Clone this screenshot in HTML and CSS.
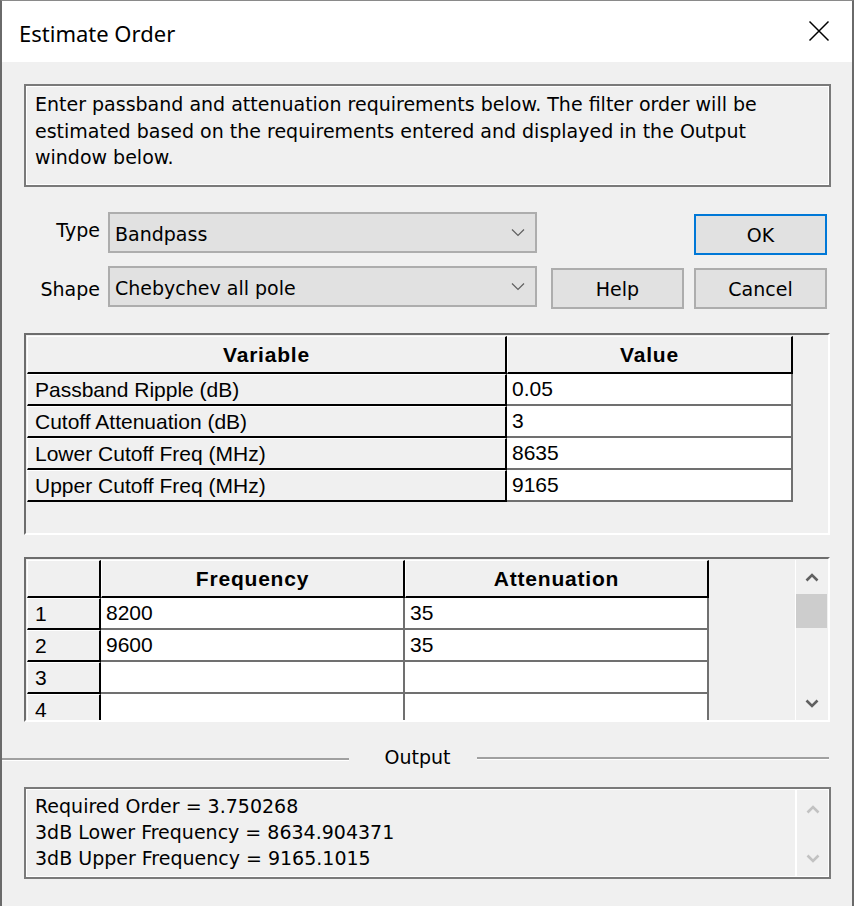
FILE: index.html
```html
<!DOCTYPE html>
<html>
<head>
<meta charset="utf-8">
<link rel="stylesheet" href="styles.css">
</head>
<body>
<div class="window">
  <div class="titlebar">
    <span class="title">Estimate Order</span>
    <svg class="close" width="22" height="22" viewBox="0 0 22 22"><path d="M1.5 1.5 L20.5 20.5 M20.5 1.5 L1.5 20.5" stroke="#000" stroke-width="1.5" fill="none"/></svg>
  </div>
  <div class="body">
    <div class="desc">Enter passband and attenuation requirements below. The filter order will be estimated based on the requirements entered and displayed in the Output window below.</div>

    <div class="controls">
      <div class="fields">
        <div class="field">
          <span class="label label-type">Type</span>
          <div class="combo"><span>Bandpass</span><svg width="14" height="9" viewBox="0 0 14 9"><path d="M1 1.5 L7 7.5 L13 1.5" stroke="#5f5f5f" stroke-width="1.2" fill="none"/></svg></div>
        </div>
        <div class="field">
          <span class="label label-shape">Shape</span>
          <div class="combo"><span>Chebychev all pole</span><svg width="14" height="9" viewBox="0 0 14 9"><path d="M1 1.5 L7 7.5 L13 1.5" stroke="#5f5f5f" stroke-width="1.2" fill="none"/></svg></div>
        </div>
      </div>
      <div class="buttons">
        <span></span>
        <div class="btn default">OK</div>
        <div class="btn">Help</div>
        <div class="btn">Cancel</div>
      </div>
    </div>

    <div class="grid grid1">
      <div class="row">
        <div class="hcell w-var">Variable</div>
        <div class="hcell w-val">Value</div>
      </div>
      <div class="row">
        <div class="ncell w-var">Passband Ripple (dB)</div>
        <div class="dcell w-val">0.05</div>
      </div>
      <div class="row">
        <div class="ncell w-var">Cutoff Attenuation (dB)</div>
        <div class="dcell w-val">3</div>
      </div>
      <div class="row">
        <div class="ncell w-var">Lower Cutoff Freq (MHz)</div>
        <div class="dcell w-val">8635</div>
      </div>
      <div class="row">
        <div class="ncell w-var">Upper Cutoff Freq (MHz)</div>
        <div class="dcell w-val">9165</div>
      </div>
    </div>

    <div class="grid grid2">
      <div class="gtable">
        <div class="row">
          <div class="hcell w-num"></div>
          <div class="hcell w-col">Frequency</div>
          <div class="hcell w-col">Attenuation</div>
        </div>
        <div class="row">
          <div class="ncell w-num">1</div>
          <div class="dcell w-col">8200</div>
          <div class="dcell w-col">35</div>
        </div>
        <div class="row">
          <div class="ncell w-num">2</div>
          <div class="dcell w-col">9600</div>
          <div class="dcell w-col">35</div>
        </div>
        <div class="row">
          <div class="ncell w-num">3</div>
          <div class="dcell w-col"></div>
          <div class="dcell w-col"></div>
        </div>
        <div class="row">
          <div class="ncell w-num">4</div>
          <div class="dcell w-col"></div>
          <div class="dcell w-col"></div>
        </div>
      </div>
      <div class="vscroll">
        <div class="arrow up"><svg width="14" height="9" viewBox="0 0 14 9"><path d="M1.5 7.5 L7 2 L12.5 7.5" stroke="#606060" stroke-width="2.6" fill="none"/></svg></div>
        <div class="thumb"></div>
        <div class="track"></div>
        <div class="arrow down"><svg width="14" height="9" viewBox="0 0 14 9"><path d="M1.5 1.5 L7 7 L12.5 1.5" stroke="#606060" stroke-width="2.6" fill="none"/></svg></div>
      </div>
    </div>

    <div class="legend">
      <span class="line left"></span>
      <span class="legend-text">Output</span>
      <span class="line right"></span>
    </div>

    <div class="output">
      <div class="out-text">
        <div>Required Order = 3.750268</div>
        <div>3dB Lower Frequency = 8634.904371</div>
        <div>3dB Upper Frequency = 9165.1015</div>
      </div>
      <div class="oscroll">
        <svg width="14" height="9" viewBox="0 0 14 9"><path d="M1.5 7.5 L7 2 L12.5 7.5" stroke="#c2c2c2" stroke-width="2.6" fill="none"/></svg>
        <svg width="14" height="9" viewBox="0 0 14 9"><path d="M1.5 1.5 L7 7 L12.5 1.5" stroke="#c2c2c2" stroke-width="2.6" fill="none"/></svg>
      </div>
    </div>
  </div>
</div>
</body>
</html>
```
FILE: styles.css
```css
html, body {
  margin: 0;
  padding: 0;
  background: #f0f0f0;
}

.window {
  box-sizing: border-box;
  width: 854px;
  height: 906px;
  border-left: 2px solid #6a6a6a;
  border-right: 2px solid #6a6a6a;
  border-top: 1px solid #8a8a8a;
  background: #f0f0f0;
  overflow: hidden;
}

.titlebar {
  height: 61px;
  background: #ffffff;
  display: flex;
  align-items: center;
  justify-content: space-between;
  padding: 0 22px 0 17px;
}

.title {
  font-family: "Noto Sans", "Open Sans", sans-serif;
  font-size: 22px;
  color: #000;
  padding-top: 2px;
}

.close {
  display: block;
  margin-bottom: 2px;
}

.body {
  padding: 22px 21px 0 22px;
  font-family: "DejaVu Sans", sans-serif;
  font-size: 19px;
  color: #000;
}

.desc {
  box-sizing: border-box;
  height: 103px;
  border: 2px solid #7a7a7a;
  box-shadow: inset 0 0 0 1px #ffffff;
  padding: 5px 9px 0 9px;
  line-height: 26.5px;
}

.controls {
  display: flex;
  justify-content: space-between;
  margin-top: 25px;
  padding-right: 4px;
}

.fields {
  display: flex;
  flex-direction: column;
  gap: 13px;
}

.field {
  display: flex;
  align-items: center;
  gap: 8px;
}

.label {
  width: 76px;
  text-align: right;
}

.label-type {
  padding-bottom: 6px;
}

.label-shape {
  padding-top: 4px;
}

.combo {
  box-sizing: border-box;
  width: 429px;
  height: 41px;
  background: #e1e1e1;
  border: 2px solid #adadad;
  display: flex;
  align-items: center;
  justify-content: space-between;
  padding: 0 10px 0 5px;
}

.combo span {
  padding-top: 2px;
}

.combo svg {
  display: block;
}

.buttons {
  display: grid;
  grid-template-columns: 133px 133px;
  column-gap: 10px;
  row-gap: 13px;
  margin-top: 2px;
}

.btn {
  box-sizing: border-box;
  height: 41px;
  background: #e1e1e1;
  border: 2px solid #adadad;
  display: flex;
  align-items: center;
  justify-content: center;
  padding-top: 1px;
}

.btn.default {
  border-color: #0078d7;
}

.grid {
  box-sizing: border-box;
  width: 806px;
  background: #f0f0f0;
  border-top: 2px solid #6d6d6d;
  border-left: 2px solid #6d6d6d;
  border-right: 2px solid #ffffff;
  border-bottom: 2px solid #ffffff;
  padding: 1px 0 0 1px;
  font-family: "Liberation Sans", Arial, sans-serif;
  font-size: 21px;
  overflow: hidden;
}

.grid1 {
  height: 202px;
  margin-top: 24px;
}

.grid2 {
  height: 165px;
  margin-top: 22px;
  display: flex;
  align-items: flex-start;
}

.row {
  display: flex;
}

.hcell,
.ncell,
.dcell {
  box-sizing: border-box;
  display: flex;
  align-items: center;
  white-space: nowrap;
}

.hcell {
  height: 38px;
  justify-content: center;
  font-weight: bold;
  letter-spacing: 0.8px;
  background: #f0f0f0;
  border-top: 1px solid #ffffff;
  border-left: 1px solid #ffffff;
  border-right: 2px solid #000000;
  border-bottom: 2px solid #000000;
}

.ncell {
  height: 32px;
  background: #f0f0f0;
  border-top: 1px solid #ffffff;
  border-left: 1px solid #ffffff;
  border-right: 2px solid #000000;
  border-bottom: 2px solid #000000;
  padding-left: 7px;
}

.dcell {
  height: 32px;
  background: #ffffff;
  border-right: 2px solid #707070;
  border-bottom: 2px solid #707070;
  padding-left: 5px;
}

.w-var { width: 480px; }
.w-val { width: 286px; }
.w-num { width: 74px; }
.w-col { width: 304px; }

.vscroll {
  box-sizing: border-box;
  margin-left: auto;
  margin-right: 1px;
  width: 32px;
  height: 161px;
  border-left: 1px solid #ffffff;
  display: flex;
  flex-direction: column;
  align-items: stretch;
}

.arrow {
  display: flex;
  align-items: center;
  justify-content: center;
}

.arrow.up {
  height: 34px;
}

.arrow.down {
  height: 36px;
}

.thumb {
  height: 34px;
  background: #cdcdcd;
}

.track {
  flex: 1;
}

.legend {
  display: flex;
  align-items: center;
  margin: 24px 0 0 -22px;
  height: 24px;
}

.line {
  display: block;
  height: 3px;
  border-top: 2px solid #a0a0a0;
  border-bottom: 1px solid #ffffff;
  box-sizing: border-box;
}

.line.left {
  width: 347px;
  margin-top: 2px;
}

.line.right {
  width: 352px;
}

.legend-text {
  box-sizing: border-box;
  width: 128px;
  text-align: center;
  padding: 0 0 2px 9px;
}

.output {
  box-sizing: border-box;
  margin-top: 17px;
  width: 807px;
  height: 92px;
  border: 2px solid #7a7a7a;
  box-shadow: inset 0 0 0 1px #ffffff;
  display: flex;
  justify-content: space-between;
}

.out-text {
  padding: 4px 0 0 9px;
  line-height: 26px;
}

.oscroll {
  box-sizing: border-box;
  width: 33px;
  margin: 1px 1px 1px 0;
  border-left: 2px solid #ffffff;
  display: flex;
  flex-direction: column;
  align-items: center;
  justify-content: space-between;
  padding: 15px 0 13px 0;
}
```
